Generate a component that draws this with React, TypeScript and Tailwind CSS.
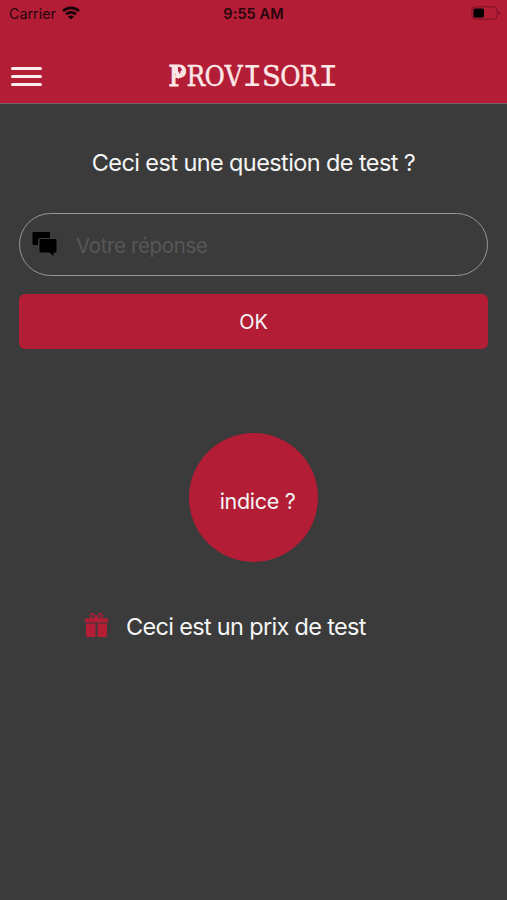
function StatusBar() {
  return (
    <div className="flex h-7 items-center justify-between pl-[9px] pr-[6px] text-[14px] leading-7 text-[#28060d]">
      <div className="flex w-40 items-center gap-[6px]">
        <span className="text-[14.3px]">Carrier</span>
        <svg className="-mt-[2px]" width="18" height="14" viewBox="0 0 18 14" fill="none" stroke="#16030a" strokeWidth="2.7">
          <path d="M1 5.1C5.5.8 12.5.8 17 5.1" />
          <path d="M4 8.3c2.8-2.6 7.2-2.6 10 0" />
          <path d="M9 13.6 5.9 10.6c1.8-1.6 4.4-1.6 6.2 0z" fill="#16030a" stroke="none" />
        </svg>
      </div>
      <span className="-ml-[3px] text-[14.5px] font-semibold tracking-[0.1px]">9:55 AM</span>
      <div className="-mt-[2px] flex w-40 justify-end">
        <svg width="30" height="14" viewBox="0 0 30 14" fill="none">
          <rect x="1" y=".8" width="25" height="12.4" rx="3.5" stroke="#7d1227" />
          <rect x="2.5" y="2.5" width="10.5" height="9" rx="1.5" fill="#000" />
          <path d="M27.3 5v4l2.2-2z" fill="#7d1227" />
        </svg>
      </div>
    </div>
  );
}

const LETTER_STYLES: Record<string, string> = {
  P: "scale-x-110 [-webkit-text-stroke:0.8px_#fbe7e7]",
  I: "scale-x-110 pt-[2px] font-['Liberation_Mono',monospace] text-[31px] [-webkit-text-stroke:0px]",
  S: "font-['DejaVu_Serif',serif]",
};

function Logo() {
  return (
    <div className="grid h-8 w-[170px] grid-cols-9 font-['DejaVu_Serif_Condensed','DejaVu_Serif',serif] text-[27.5px] leading-8 text-[#fbe7e7] [-webkit-text-stroke:0.4px_#fbe7e7]">
      {"PROVISORI".split("").map((letter, i) => (
        <span key={i} className="relative flex justify-center">
          <span className={LETTER_STYLES[letter] ?? ""}>{letter}</span>
          {i === 0 && (
            <svg className="absolute left-[3px] top-[7px]" width="14" height="14" viewBox="0 0 14 14" fill="#fbe7e7">
              <path d="M4 0h3v4l2 3 1-4 2 2-2 5-3 2-3-6z" />
            </svg>
          )}
        </span>
      ))}
    </div>
  );
}

export default function App() {
  return (
    <main className="flex h-[900px] w-[507px] flex-col overflow-hidden bg-[#3b3b3b] font-['Inter',sans-serif] text-[#f5f5f5]">
      <header className="h-[104px] border-b border-[#77605f] bg-[#b31d36]">
        <StatusBar />
        <div className="grid grid-cols-[156px_1fr_156px] items-start pt-8">
          <button aria-label="Menu" className="ml-[11px] mt-[7px] flex w-[31px] flex-col gap-[5px]">
            <span className="h-[3px] rounded-full bg-[#fbeeee]" />
            <span className="h-[3px] rounded-full bg-[#fbeeee]" />
            <span className="h-[3px] rounded-full bg-[#fbeeee]" />
          </button>
          <div className="-ml-[2px] flex justify-center"><Logo /></div>
        </div>
      </header>
      <section className="flex flex-col px-[19px]">
        <h1 className="mt-[43px] h-8 text-center text-[23.5px] leading-8">
          <span className="whitespace-nowrap tracking-[-0.6px]">Ceci est une question de test ?</span>
        </h1>
        <div className="mt-[34px] flex h-[63px] items-center rounded-[32px] border-[1.5px] border-[#969696] pl-3">
          <svg width="25" height="25" viewBox="0 0 25 25" fill="#000">
            <path d="M1.500 0h15.500a1 1 0 0 1 1 1v5H8.500a2.500 2.500 0 0 0-2.500 2.500V13H1.500a1 1 0 0 1-1-1V1a1 1 0 0 1 1-1z" />
            <path d="M8.500 7h15a1 1 0 0 1 1 1v11.500a1 1 0 0 1-1 1H21.500v3.500l-4-3.500h-9a1 1 0 0 1-1-1V8a1 1 0 0 1 1-1z" />
          </svg>
          <span className="ml-[19px] mt-[3px] text-[20.500px] tracking-[-0.37px] text-[#575757]">Votre réponse</span>
        </div>
        <button className="mt-[18px] h-[55px] rounded-[6px] bg-[#b31d36] text-[20px]">OK</button>
        <button className="mt-[84px] h-[129px] w-[129px] self-center rounded-full bg-[#b31d36] pl-[8px] pt-[7px] text-[21.500px] tracking-[-0.300px]">indice ?</button>
        <div className="mt-12 flex h-8 items-center pl-[66px]">
          <svg className="-mt-[4px]" width="23" height="25" viewBox="0 0 23 25" fill="#b31d36">
            <path d="M0 6.500h23v4H0zM1 11.500h9.500V25H2.500A1.500 1.500 0 0 1 1 23.500zM12.500 11.500H22v12a1.500 1.500 0 0 1-1.500 1.500h-8z" />
            <path d="M11.500 6.500C9.500 2 7.500.8 6 2S5.500 6 8 6.500h7c2.500-.5 3.500-3.300 2-4.500s-3.500 0-5.500 4.500z" fill="none" stroke="#b31d36" strokeWidth="1.600" />
          </svg>
          <span className="ml-[18px] mt-px whitespace-nowrap text-[23.500px] tracking-[-0.680px]">Ceci est un prix de test</span>
        </div>
      </section>
    </main>
  );
}
